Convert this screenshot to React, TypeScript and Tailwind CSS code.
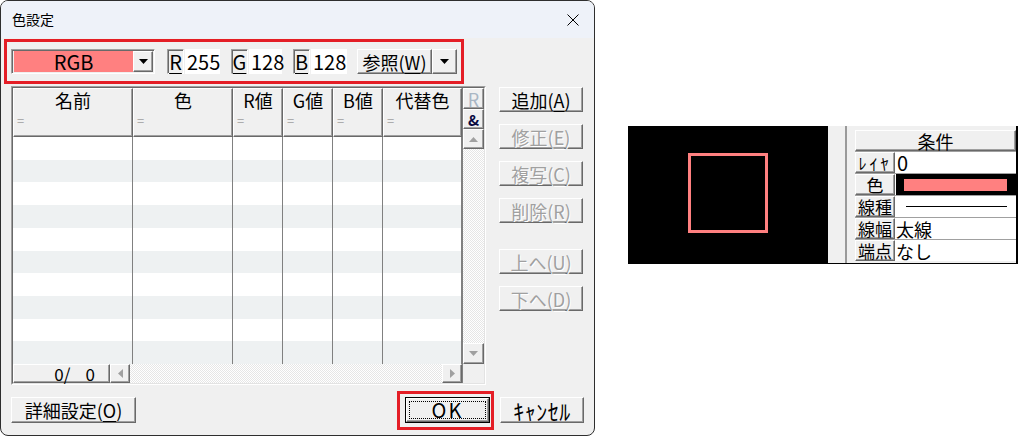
import React from 'react';

const raised =
  'bg-[#f0f0f0] border border-t-white border-l-white border-r-[#696969] border-b-[#696969] shadow-[inset_-1px_-1px_0_#a0a0a0]';
const sunken =
  'border border-t-[#a0a0a0] border-l-[#a0a0a0] border-r-white border-b-white shadow-[inset_1px_1px_0_#696969]';
const dither =
  'bg-[repeating-conic-gradient(#ffffff_0_25%,#e6e6e6_0_50%)] bg-[length:2px_2px]';

const columns = [
  { label: '名前', w: 'w-[120px]' },
  { label: '色', w: 'w-[100px]' },
  { label: 'R値', w: 'w-[50px]' },
  { label: 'G値', w: 'w-[50px]' },
  { label: 'B値', w: 'w-[50px]' },
  { label: '代替色', w: 'w-[79px]' },
];

const Tri = ({ dir, gray }: { dir: 'down' | 'up' | 'left' | 'right'; gray?: boolean }) => {
  const c = gray ? '#a0a0a0' : '#000000';
  const vertical = dir === 'down' || dir === 'up';
  const pts =
    dir === 'down' ? '0,0 9,0 4.5,5' : dir === 'up' ? '0,5 9,5 4.5,0' : dir === 'left' ? '5,0 5,9 0,4.5' : '0,0 0,9 5,4.5';
  return (
    <svg width={vertical ? 9 : 5} height={vertical ? 5 : 9} viewBox={vertical ? '0 0 9 5' : '0 0 5 9'}>
      <polygon points={pts} fill={c} />
    </svg>
  );
};

const U = ({ children }: { children: React.ReactNode }) => (
  <span className="underline underline-offset-[3px] decoration-1">{children}</span>
);

const Btn = ({
  children,
  disabled,
  className = '',
}: {
  children: React.ReactNode;
  disabled?: boolean;
  className?: string;
}) => (
  <div
    className={`${raised} h-[25px] w-[84px] flex items-center justify-center text-[18px] leading-none ${
      disabled ? 'text-[#a0a0a0] [text-shadow:1px_1px_0_#ffffff]' : 'text-black'
    } ${className}`}
  >
    {children}
  </div>
);

const ChannelBox = ({ ch, value, w }: { ch: string; value: string; w: string }) => (
  <div className="flex h-[25px] items-stretch">
    <div className={`${sunken} w-[17px] bg-[#f0f0f0] flex items-center justify-center`}>
      <U>{ch}</U>
    </div>
    <div className={`${w} ml-[1px] bg-white flex items-center pl-[2px]`}>{value}</div>
  </div>
);

const Dialog = () => (
  <div className="relative w-[595px] h-[436px] shrink-0 rounded-lg border border-[#2e2e2e] bg-[#f0f0f0] overflow-hidden flex flex-col">
    <div className="h-[37px] bg-[#eef2f9] flex items-center justify-between pl-[11px] pr-[15px] text-[14px] font-['Noto_Sans_CJK_JP',sans-serif]">
      <span>色設定</span>
      <svg width="12" height="12" viewBox="0 0 12 12">
        <path d="M0.5 0.5 L11.5 11.5 M11.5 0.5 L0.5 11.5" stroke="#000" strokeWidth="1" />
      </svg>
    </div>

    {/* toolbar */}
    <div className="mt-[11px] pl-[10px] flex items-center text-[20px] leading-none">
      <div className={`${sunken} w-[144px] h-[25px] flex p-[1px] pl-[2px]`}>
        <div className="flex-1 bg-[#ff8080] flex items-center justify-center">RGB</div>
        <div className={`${raised} w-[20px] flex items-center justify-center`}>
          <Tri dir="down" />
        </div>
      </div>
      <div className="ml-[12px]">
        <ChannelBox ch="R" value="255" w="w-[35px]" />
      </div>
      <div className="ml-[11px]">
        <ChannelBox ch="G" value="128" w="w-[33px]" />
      </div>
      <div className="ml-[11px]">
        <ChannelBox ch="B" value="128" w="w-[36px]" />
      </div>
      <div className={`${raised} ml-[10px] h-[25px] w-[75px] flex items-center justify-center text-[18px]`}>
        参照(<U>W</U>)
      </div>
      <div className={`${raised} h-[25px] w-[25px] flex items-center justify-center`}>
        <Tri dir="down" />
      </div>
    </div>

    {/* main */}
    <div className="mt-[12px] pl-[10px] flex items-start">
      <div className="w-[475px] h-[299px] border border-t-[#a0a0a0] border-l-[#a0a0a0] border-r-white border-b-white">
        <div className="h-full border border-t-[#696969] border-l-[#696969] border-r-[#e3e3e3] border-b-[#e3e3e3] flex">
          <div className="w-[449px] flex flex-col">
            <div className="h-[49px] flex">
              {columns.map((c) => (
                <div key={c.label} className={`${raised} ${c.w} h-full flex flex-col text-[18px] leading-none`}>
                  <div className="pt-[2px] text-center">{c.label}</div>
                  <div className="mt-auto mb-[9px] pl-[3px] text-[13px] text-[#a0a0a0]">=</div>
                </div>
              ))}
            </div>
            <div className="flex-1 flex flex-col">
              {Array.from({ length: 10 }).map((_, i) => (
                <div key={i} className={`flex-1 flex ${i % 2 ? 'bg-[#eef1f2]' : 'bg-white'}`}>
                  {columns.map((c) => (
                    <div key={c.label} className={`${c.w} border-r border-[#808080]`} />
                  ))}
                </div>
              ))}
            </div>
            <div className="h-[19px] flex">
              <div className={`${raised} w-[97px] flex items-center justify-end pr-[14px] text-[17px] leading-none whitespace-pre`}>
                {'0/    0'}
              </div>
              <div className={`${raised} w-[20px] flex items-center justify-center`}>
                <Tri dir="left" gray />
              </div>
              <div className={`flex-1 ${dither}`} />
              <div className={`${raised} w-[20px] flex items-center justify-center`}>
                <Tri dir="right" gray />
              </div>
            </div>
          </div>
          <div className="w-[22px] flex flex-col border-l border-[#808080]">
            <div className={`${raised} h-[21px] flex items-center justify-center text-[18px] leading-none text-[#a9b6c4]`}>
              <U>R</U>
            </div>
            <div className={`${raised} h-[20px] flex items-center justify-center text-[15px] leading-none font-bold text-[#0a0a40]`}>
              &amp;
            </div>
            <div className={`${raised} h-[20px] flex items-center justify-center`}>
              <Tri dir="up" gray />
            </div>
            <div className={`flex-1 ${dither}`} />
            <div className={`${raised} h-[21px] flex items-center justify-center`}>
              <Tri dir="down" gray />
            </div>
            <div className="h-[19px] bg-[#f0f0f0]" />
          </div>
        </div>
      </div>

      <div className="ml-[13px] pt-[1px] flex flex-col">
        <Btn>
          追加(<U>A</U>)
        </Btn>
        <Btn disabled className="mt-[12px]">
          修正(<U>E</U>)
        </Btn>
        <Btn disabled className="mt-[12px]">
          複写(<U>C</U>)
        </Btn>
        <Btn disabled className="mt-[12px]">
          削除(<U>R</U>)
        </Btn>
        <Btn disabled className="mt-[26px]">
          上へ(<U>U</U>)
        </Btn>
        <Btn disabled className="mt-[12px]">
          下へ(<U>D</U>)
        </Btn>
      </div>
    </div>

    {/* bottom buttons */}
    <div className="mt-[12px] pl-[10px] pr-[10px] flex items-center text-[18px] leading-none">
      <div className={`${raised} w-[125px] h-[26px] flex items-center justify-center`}>
        詳細設定(<U>O</U>)
      </div>
      <div className="flex-1" />
      <div className="w-[85px] h-[26px] border border-black">
        <div className={`${raised} h-full p-[2px]`}>
          <div className="h-full border border-dotted border-black flex items-center justify-center text-[20px] tracking-[2px]">
            OK
          </div>
        </div>
      </div>
      <Btn className="ml-[10px] h-[26px] text-[22px] tracking-[0.5px]">ｷｬﾝｾﾙ</Btn>
    </div>

    {/* highlight annotations */}
    <div className="absolute left-[3px] top-[38px] w-[460px] h-[45px] border-[3px] border-[#e41e26]" />
    <div className="absolute left-[396px] top-[390px] w-[97px] h-[39px] border-[3px] border-[#e41e26]" />
  </div>
);

const propRows = [
  { label: 'ﾚｲﾔ', value: <span className="pl-[1px] text-[20px]">0</span>, small: true },
  {
    label: '色',
    value: (
      <div className="w-full h-full bg-black flex items-center pl-[8px] pr-[9px]">
        <div className="w-full h-[12px] bg-[#ff8080]" />
      </div>
    ),
  },
  {
    label: '線種',
    value: (
      <div className="w-full h-full flex items-center pl-[10px] pr-[9px]">
        <div className="w-full h-[1px] bg-black" />
      </div>
    ),
  },
  { label: '線幅', value: <span>太線</span> },
  { label: '端点', value: <span>なし</span> },
];

const Preview = () => (
  <div className="ml-[33px] mt-[126px] flex h-[138px] border-b border-black">
    <div className="w-[200px] bg-black flex items-center justify-center pb-[4px]">
      <div className="w-[80px] h-[80px] border-[3px] border-[#ff8080]" />
    </div>
    <div className="w-[19px] bg-[#f0f0f0] border-r-2 border-[#9a9a9a]" />
    <div className="w-[8px] bg-[#f0f0f0]" />
    <div className="w-[163px] bg-[#f0f0f0] pt-[4px] border-r-2 border-black text-[18px] leading-none">
      <div className="bg-[#a0a0a0] flex flex-col">
        <div className={`${raised} h-[21px] flex items-center justify-center`}>条件</div>
        {propRows.map((r) => (
          <div key={r.label} className="mt-[1px] h-[21px] flex">
            <div
              className={`${raised} w-[40px] shrink-0 flex items-center justify-center ${
                r.small ? 'text-[16px] tracking-[3px]' : 'text-[17px]'
              }`}
            >
              {r.label}
            </div>
            <div className="flex-1 bg-white flex items-center pl-[1px]">{r.value}</div>
          </div>
        ))}
      </div>
    </div>
  </div>
);

export default function App() {
  return (
    <div className="w-[1020px] h-[437px] bg-white flex items-start font-['Liberation_Sans_Narrow','Noto_Sans_CJK_JP',sans-serif] text-black">
      <Dialog />
      <Preview />
    </div>
  );
}
